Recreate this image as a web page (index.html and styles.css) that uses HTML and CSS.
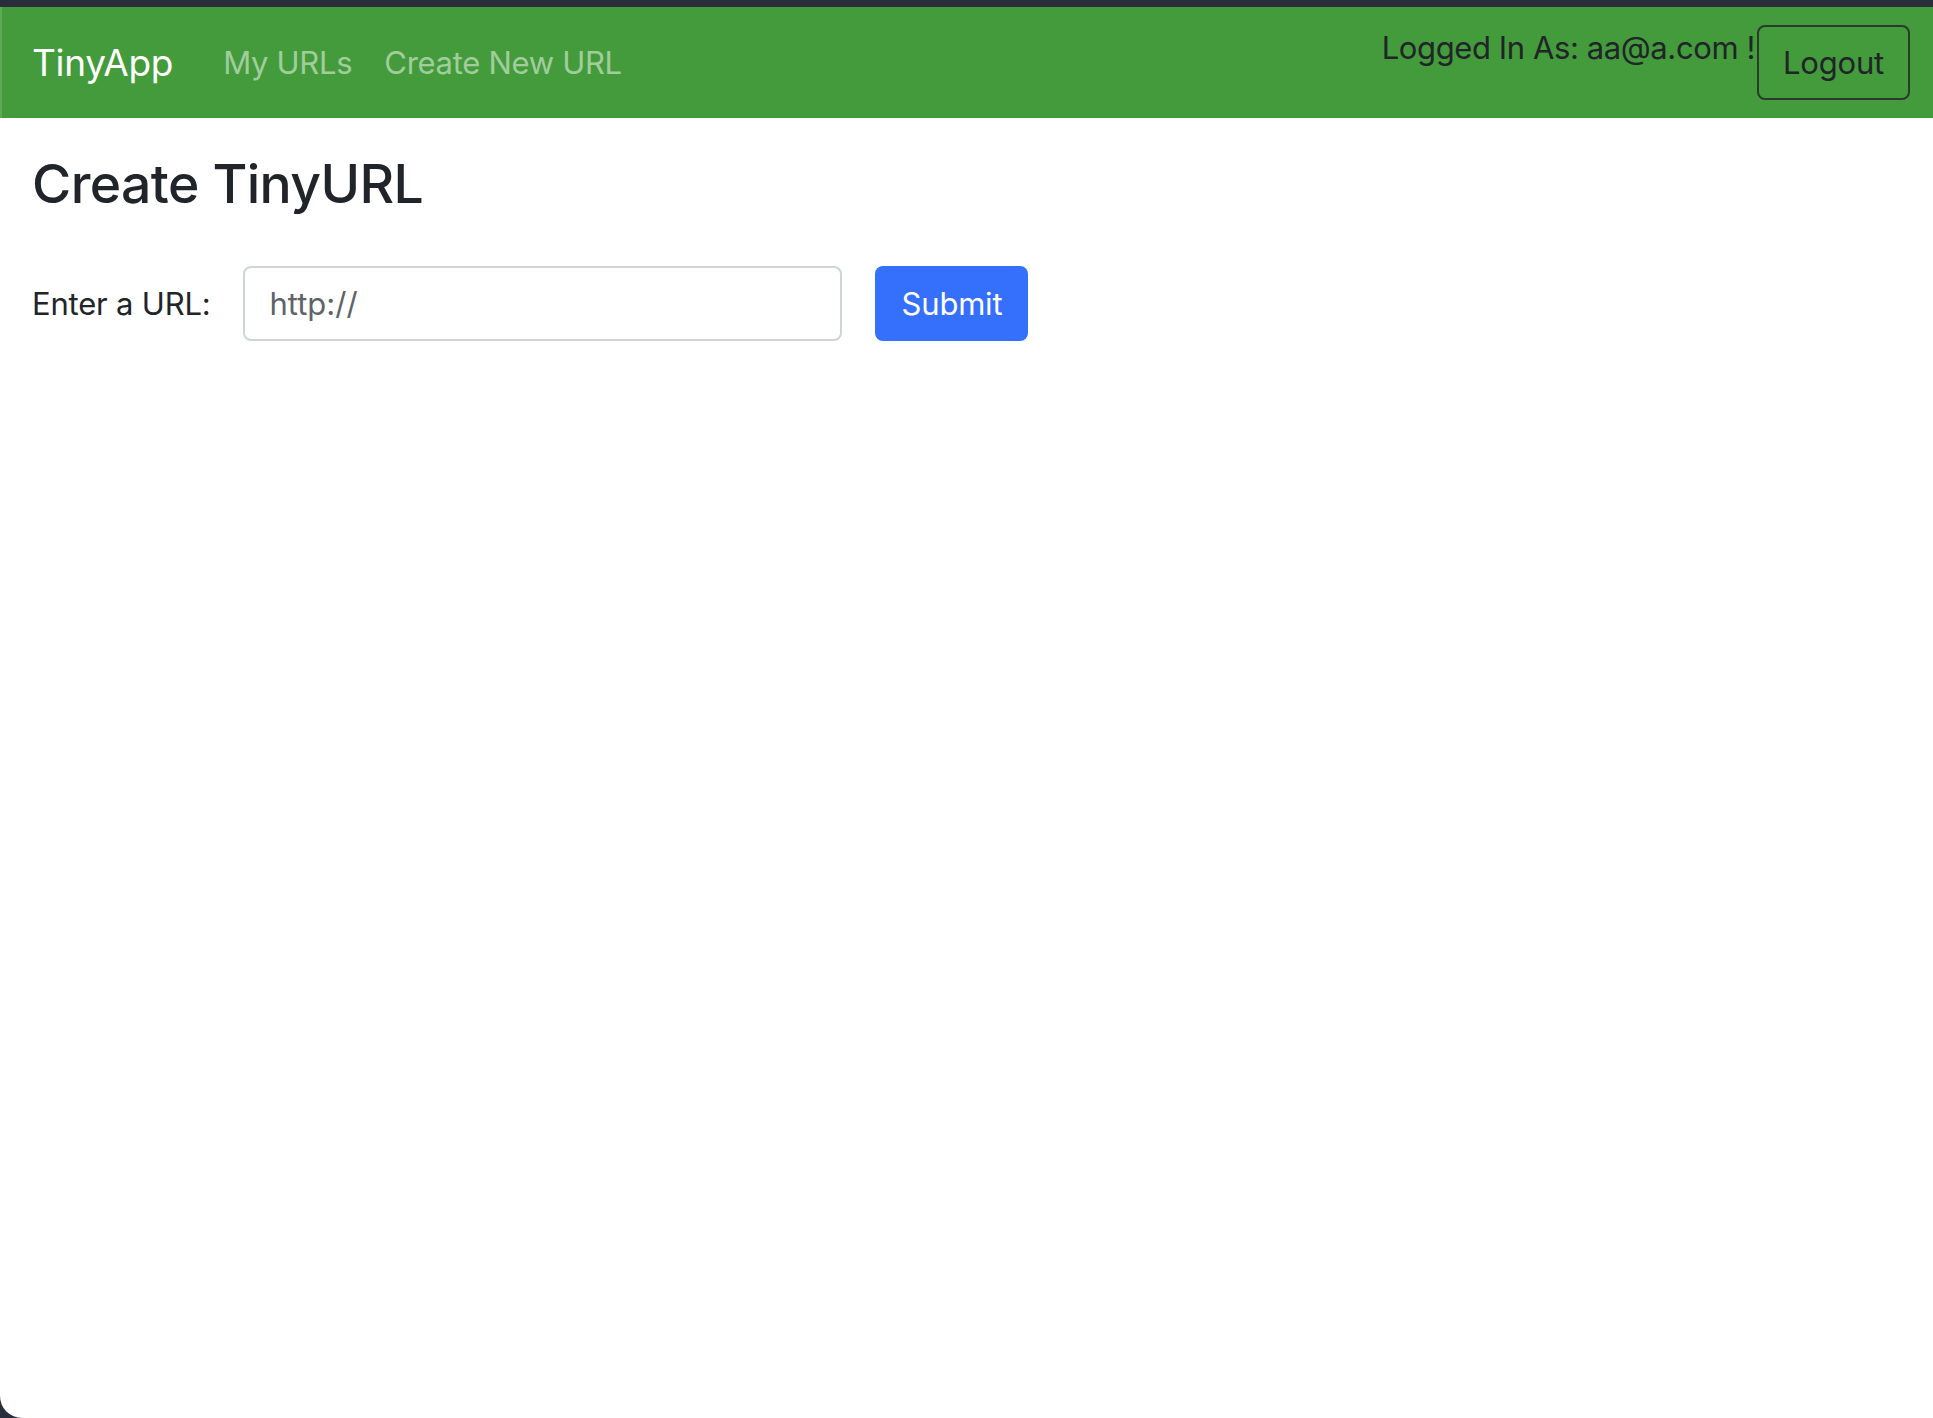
FILE: index.html
```html
<!DOCTYPE html>
<html lang="en">
<head>
<meta charset="utf-8">
<title>TinyApp</title>
<link rel="stylesheet" href="styles.css">
</head>
<body>
<div class="window">
  <nav class="navbar">
    <a class="brand" href="#">TinyApp</a>
    <div class="nav-links">
      <a class="nav-link" href="#">My URLs</a>
      <a class="nav-link" href="#">Create New URL</a>
    </div>
    <div class="nav-user">
      <span class="logged">Logged In As: aa@a.com !</span>
      <button class="btn-logout" type="button">Logout</button>
    </div>
  </nav>
  <main class="content">
    <h1 class="title">Create TinyURL</h1>
    <form class="url-form">
      <label class="url-label" for="longURL">Enter a URL:</label>
      <input class="url-input" id="longURL" type="text" placeholder="http://">
      <button class="btn-submit" type="button">Submit</button>
    </form>
  </main>
</div>
</body>
</html>
```

FILE: styles.css
```css
html, body {
  margin: 0;
  padding: 0;
  height: 100%;
}
body {
  background: #2a2d3a;
  font-family: Inter, "Noto Sans", "Liberation Sans", sans-serif;
  color: #212529;
}
.window {
  margin-top: 7px;
  height: calc(100% - 7px);
  background: #ffffff;
  border-bottom-left-radius: 22px;
  overflow: hidden;
}
.navbar {
  height: 111px;
  background: #439b3b;
  border-left: 2px solid #5fa957;
  display: flex;
  align-items: center;
  padding: 0 23px 0 30px;
  box-sizing: border-box;
}
.brand {
  font-size: 37px;
  color: #ffffff;
  text-decoration: none;
  letter-spacing: -0.3px;
  margin-right: 50px;
}
.nav-links {
  display: flex;
  gap: 32px;
}
.nav-link {
  font-size: 31px;
  color: rgba(255, 255, 255, 0.5);
  text-decoration: none;
  letter-spacing: -0.3px;
}
.nav-user {
  margin-left: auto;
  display: flex;
  align-items: flex-start;
  height: 75px;
}
.logged {
  font-size: 31px;
  line-height: 1;
  margin-top: 7px;
  letter-spacing: -0.4px;
}
.btn-logout {
  height: 75px;
  width: 153px;
  background: transparent;
  border: 2px solid #2b3a2c;
  border-radius: 8px;
  font-family: inherit;
  font-size: 31px;
  color: #212529;
  letter-spacing: -0.2px;
  margin-left: 2px;
  padding: 0;
}
.content {
  padding: 0 32px;
}
.title {
  margin: 0;
  padding-top: 33px;
  font-size: 53.5px;
  font-weight: 500;
  letter-spacing: -0.6px;
  line-height: 1.25;
}
.url-form {
  display: flex;
  align-items: center;
  gap: 33px;
  margin-top: 48px;
}
.url-label {
  font-size: 31px;
  letter-spacing: -0.2px;
}
.url-input {
  width: 599px;
  height: 75px;
  box-sizing: border-box;
  border: 2px solid #ced4da;
  border-radius: 8px;
  padding: 0 24px;
  font-family: inherit;
  font-size: 31px;
  color: #212529;
  outline: none;
}
.url-input::placeholder {
  color: #5f6368;
}
.btn-submit {
  width: 153px;
  height: 75px;
  background: #3570fc;
  border: none;
  border-radius: 8px;
  color: #ffffff;
  font-family: inherit;
  font-size: 31px;
  letter-spacing: -0.2px;
  padding: 0;
}
```
